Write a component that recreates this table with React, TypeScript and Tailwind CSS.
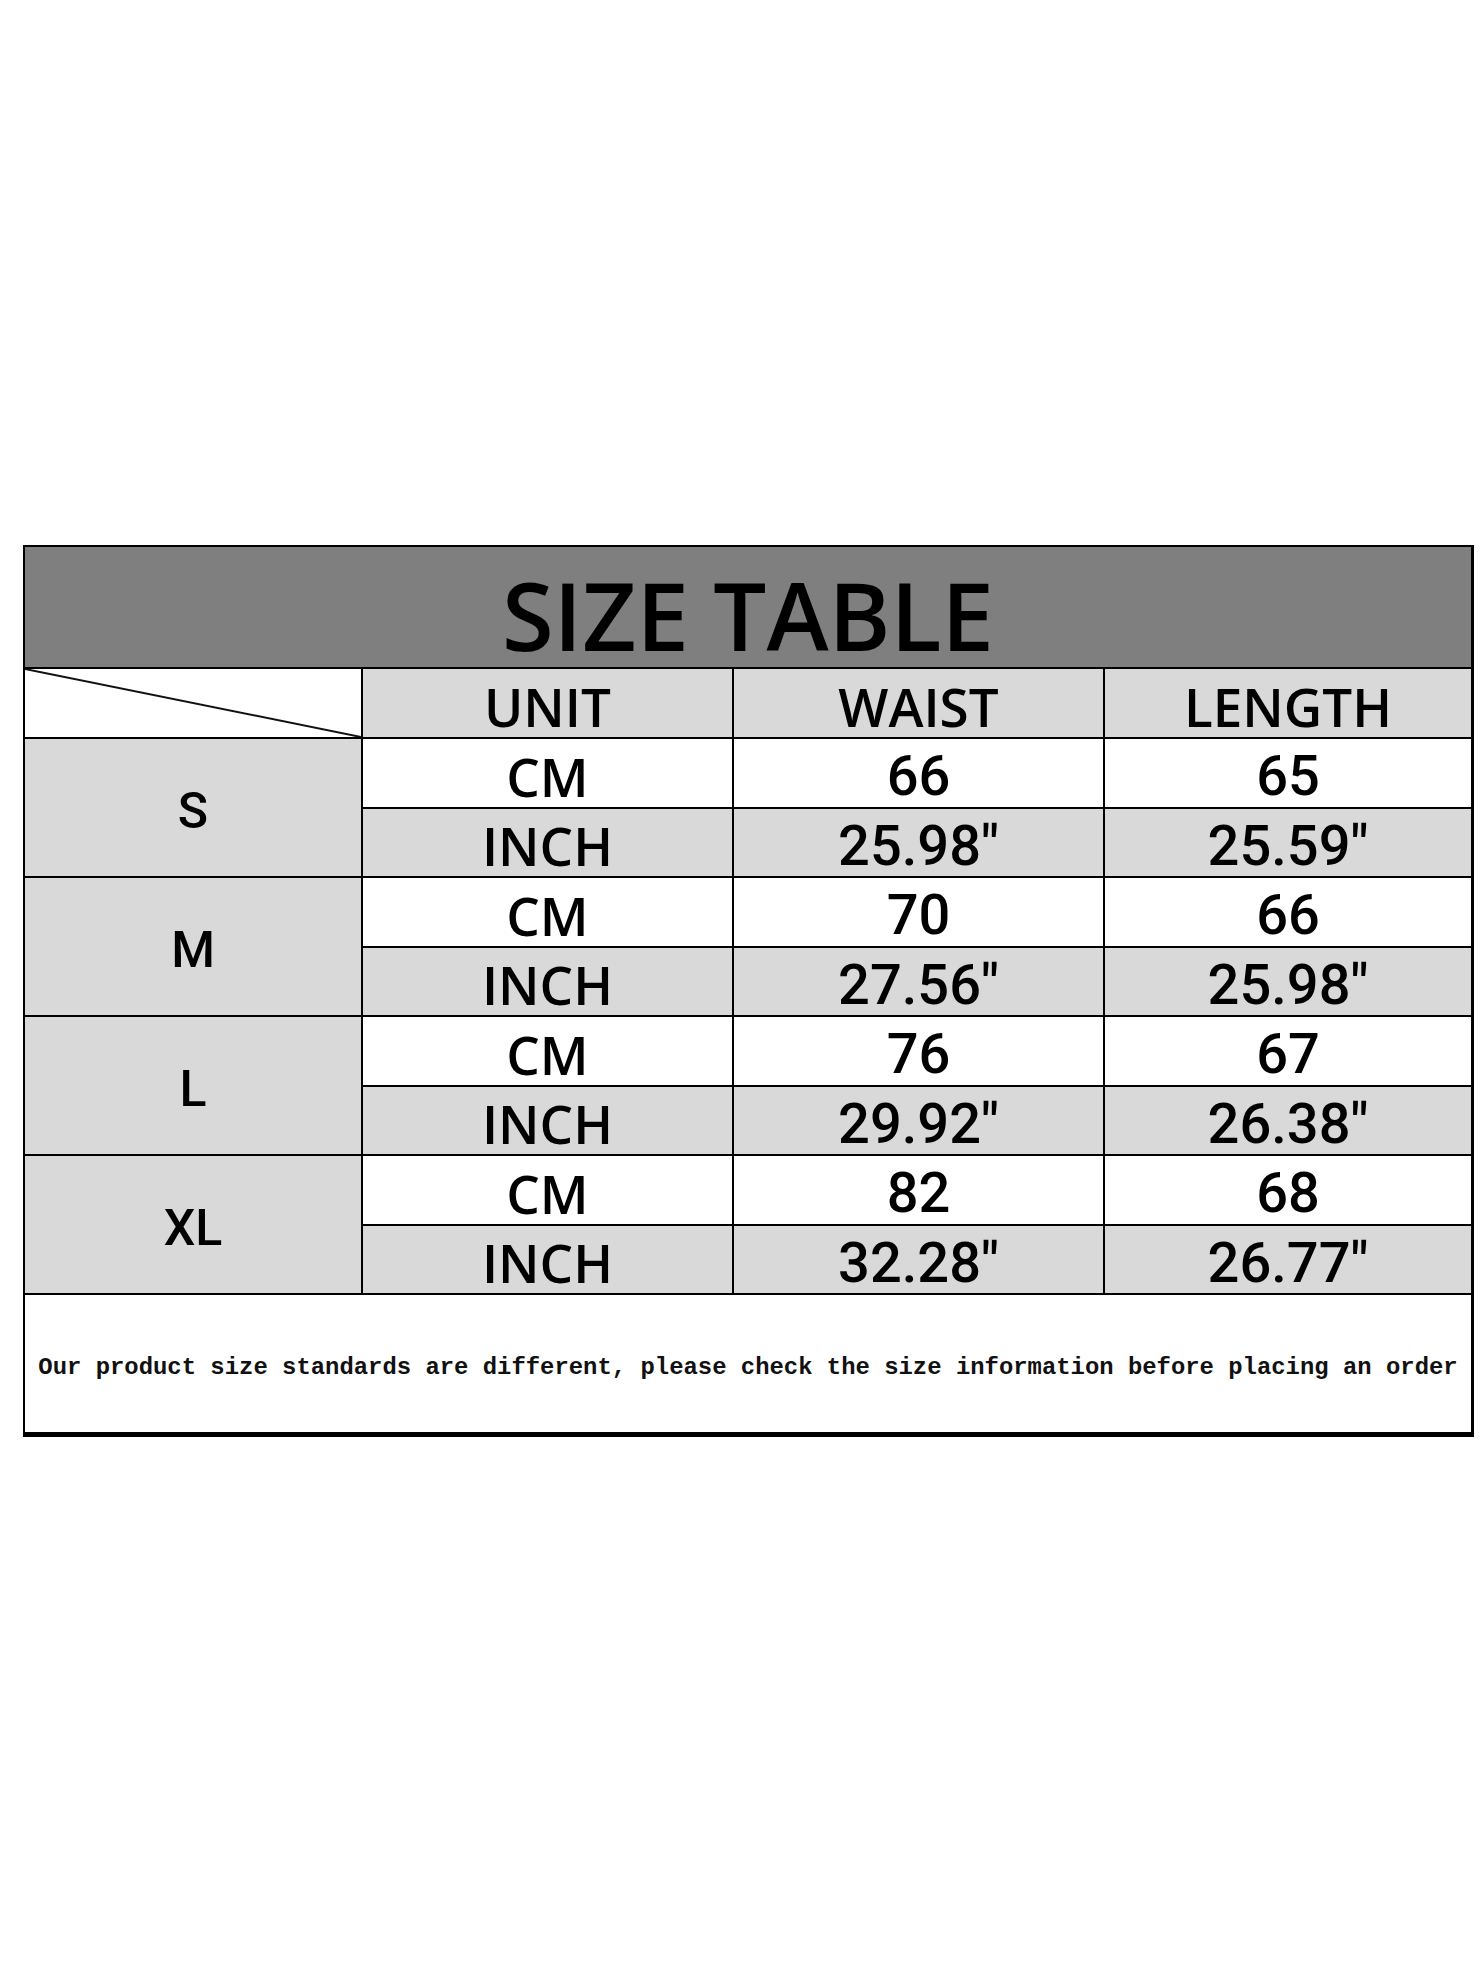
import React from 'react';

interface SizeRow {
  size: string;
  cm: [string, string];
  inch: [string, string];
}

const rows: SizeRow[] = [
  { size: 'S', cm: ['66', '65'], inch: ['25.98"', '25.59"'] },
  { size: 'M', cm: ['70', '66'], inch: ['27.56"', '25.98"'] },
  { size: 'L', cm: ['76', '67'], inch: ['29.92"', '26.38"'] },
  { size: 'XL', cm: ['82', '68'], inch: ['32.28"', '26.77"'] },
];

const cell = 'border-2 border-black px-0 pb-0 pt-[6px] text-center align-middle leading-none';
const label = "font-['Open_Sans',sans-serif] font-semibold text-[53px] text-black";
const num = "font-['Roboto','Liberation_Sans',Arial,sans-serif] font-medium text-[56px] text-black";

export default function App() {
  return (
    <div className="min-h-[1966px] w-[1482px] bg-white pt-[545px] pl-[23px]">
      <div className="w-[1451px] border-r-[3px] border-b-[3px] border-black">
        <table className="w-[1448px] table-fixed border-collapse">
          <colgroup>
            <col className="w-[338px]" />
            <col className="w-[371px]" />
            <col className="w-[371px]" />
            <col className="w-[368px]" />
          </colgroup>
          <tbody>
            <tr className="h-[122px]">
              <td
                colSpan={4}
                className="border-2 border-black bg-[#7f7f7f] px-0 pb-0 pt-[16px] text-center align-middle font-['Open_Sans',sans-serif] text-[94px] font-semibold leading-none text-black"
              >
                SIZE TABLE
              </td>
            </tr>
            <tr className="h-[70px]">
              <td className={`${cell} relative bg-white`}>
                <svg
                  className="absolute inset-0 h-full w-full"
                  viewBox="0 0 100 100"
                  preserveAspectRatio="none"
                >
                  <line
                    x1="0"
                    y1="0"
                    x2="100"
                    y2="100"
                    stroke="#111"
                    strokeWidth="2"
                    vectorEffect="non-scaling-stroke"
                  />
                </svg>
              </td>
              <td className={`${cell} bg-[#d9d9d9] ${label}`}>UNIT</td>
              <td className={`${cell} bg-[#d9d9d9] ${label}`}>WAIST</td>
              <td className={`${cell} bg-[#d9d9d9] ${label}`}>LENGTH</td>
            </tr>
            {rows.map((row) => (
              <React.Fragment key={row.size}>
                <tr className="h-[70px]">
                  <td
                    rowSpan={2}
                    className={`${cell} bg-[#d9d9d9] font-['Roboto','Liberation_Sans',Arial,sans-serif] text-[50px] font-medium text-black`}
                  >
                    {row.size}
                  </td>
                  <td className={`${cell} bg-white ${label}`}>CM</td>
                  <td className={`${cell} bg-white ${num}`}>{row.cm[0]}</td>
                  <td className={`${cell} bg-white ${num}`}>{row.cm[1]}</td>
                </tr>
                <tr className="h-[69px]">
                  <td className={`${cell} bg-[#d9d9d9] ${label}`}>INCH</td>
                  <td className={`${cell} bg-[#d9d9d9] ${num}`}>{row.inch[0]}</td>
                  <td className={`${cell} bg-[#d9d9d9] ${num}`}>{row.inch[1]}</td>
                </tr>
              </React.Fragment>
            ))}
            <tr className="h-[139px]">
              <td
                colSpan={4}
                className="border-2 border-black bg-white px-0 pb-0 pt-[8px] text-center align-middle font-['Liberation_Mono','Courier_New',monospace] text-[23.9px] font-bold leading-none text-[#111]"
              >
                Our product size standards are different, please check the size information before placing an order
              </td>
            </tr>
          </tbody>
        </table>
      </div>
    </div>
  );
}
